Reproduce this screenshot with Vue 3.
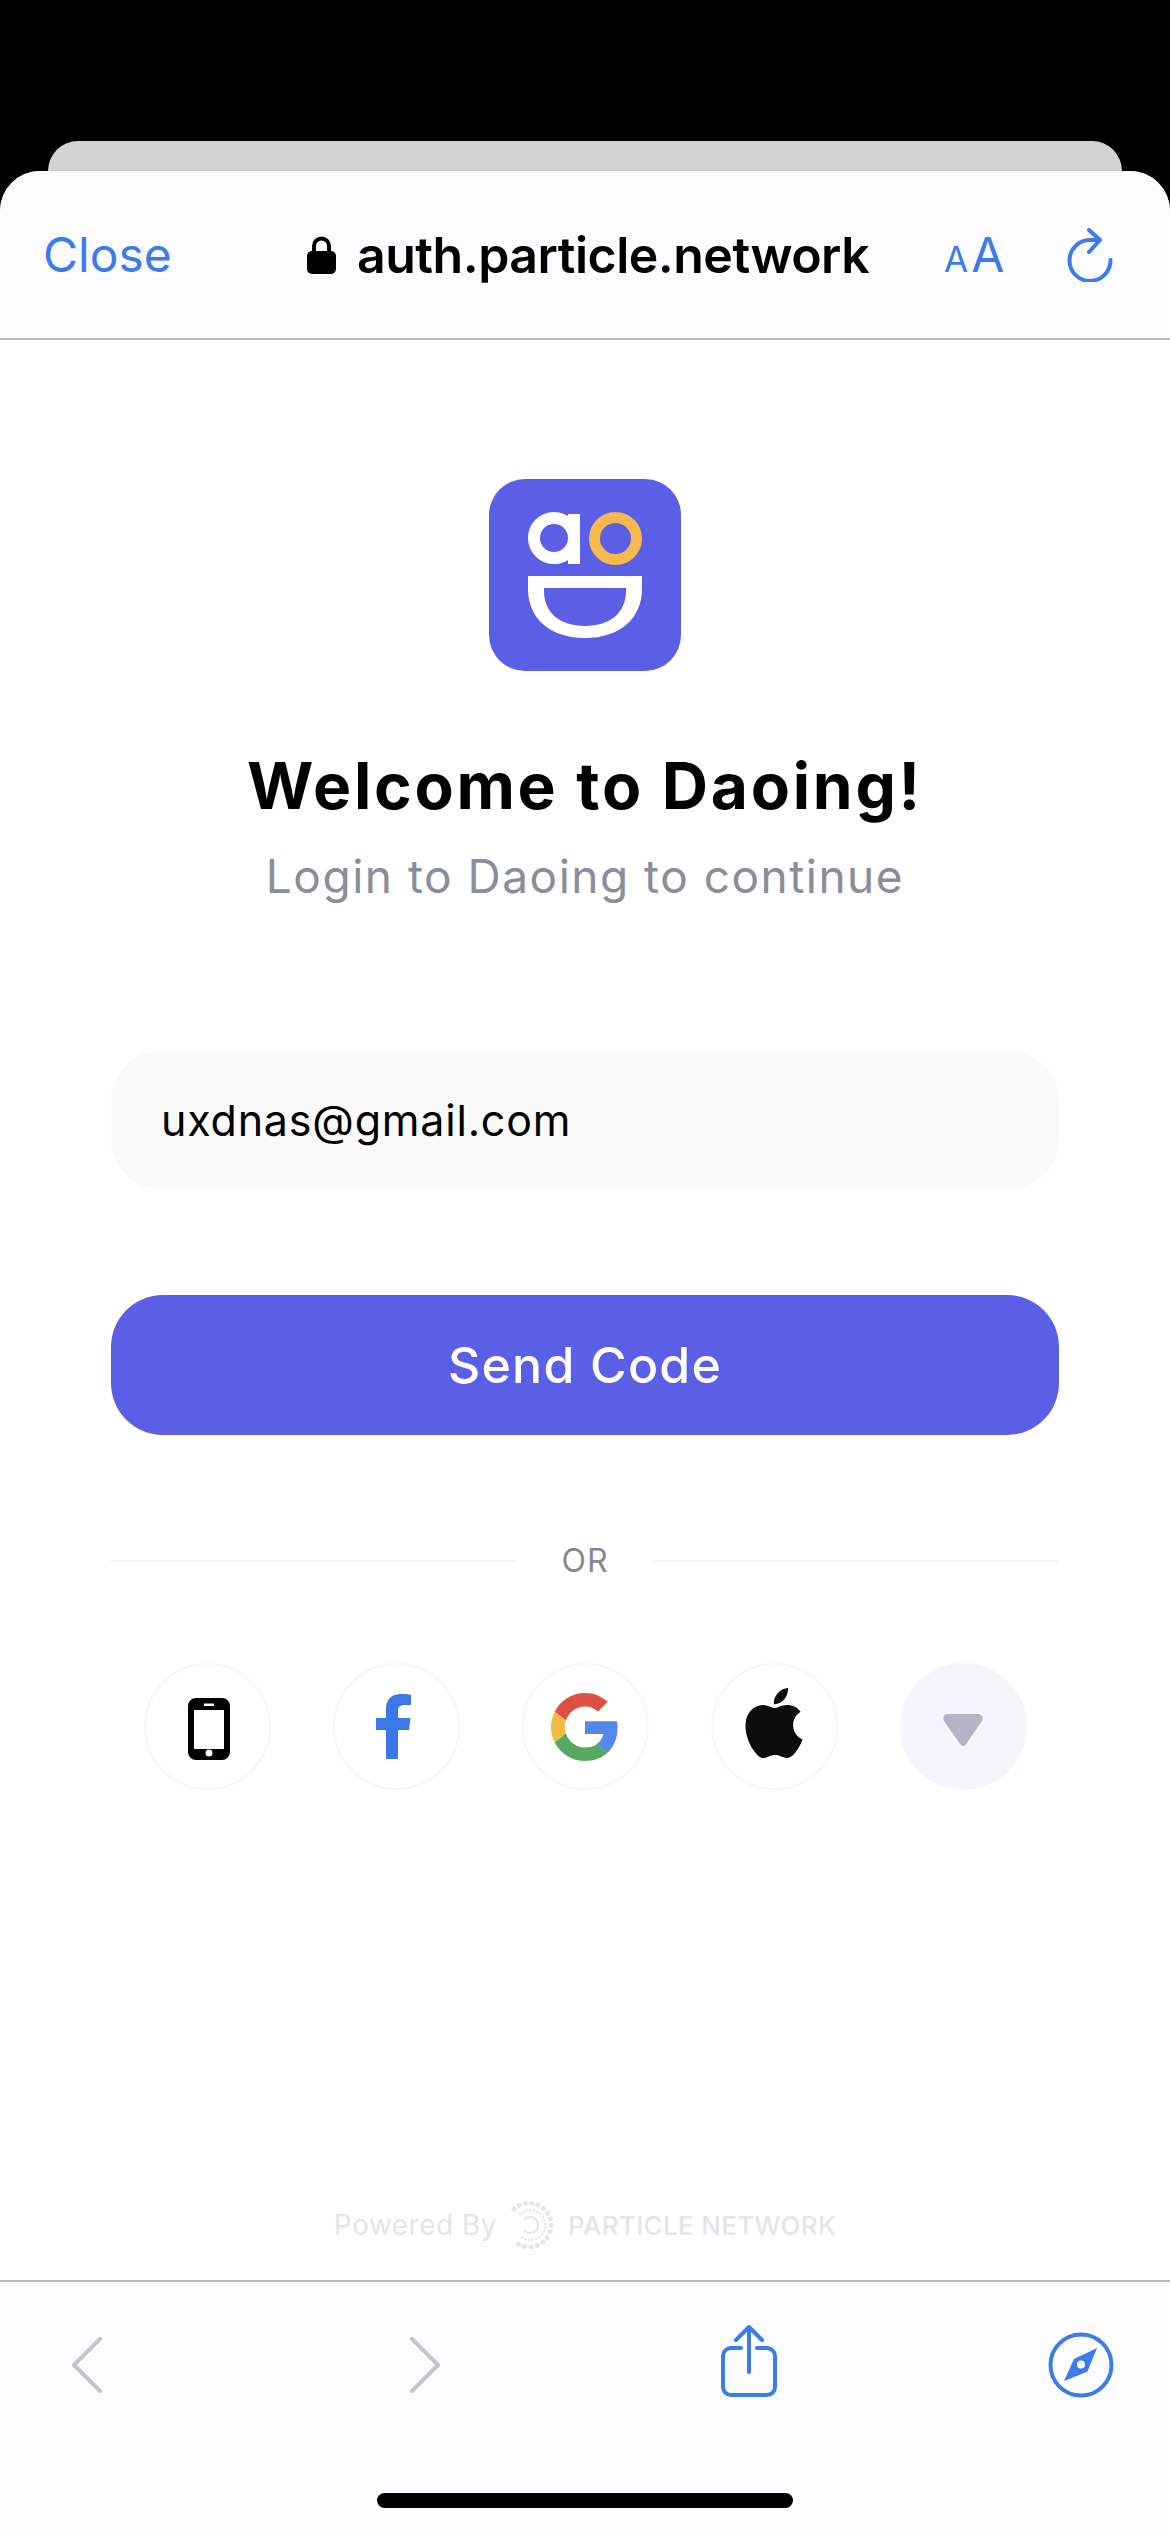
<script setup>
import { ref } from 'vue'

const email = ref('uxdnas@gmail.com')
</script>

<template>
  <div class="screen">
    <div class="back-card"></div>
    <div class="sheet">
      <header class="topbar">
        <span class="close">Close</span>
        <div class="address">
          <svg class="lock" width="29" height="39" viewBox="0 0 29 39">
            <path d="M7 18V11a7.500 7.500 0 0 1 15 0v7" fill="none" stroke="#000" stroke-width="4" />
            <rect x="0" y="16" width="29" height="23" rx="5" fill="#000" />
          </svg>
          <span class="url">auth.particle.network</span>
        </div>
        <div class="reader"><span class="small-a">A</span><span class="big-a">A</span></div>
        <svg class="reload" width="46" height="54" viewBox="0 0 46 54" fill="none" stroke="#3b7bea" stroke-width="4" stroke-linecap="round" stroke-linejoin="round">
          <path d="M33 12H23A20.500 20.500 0 1 0 43.500 32" />
          <path d="M22 2L33 12L22 24" />
        </svg>
      </header>

      <main class="content">
        <svg class="logo" width="192" height="192" viewBox="0 0 192 192">
          <rect width="192" height="192" rx="36" fill="#5b5fe6" />
          <circle cx="65" cy="59" r="20" fill="none" stroke="#fff" stroke-width="12" />
          <rect x="79" y="35" width="12" height="50" fill="#fff" />
          <circle cx="126.500" cy="59.500" r="21" fill="none" stroke="#f5b94c" stroke-width="11" />
          <path fill="#fff" fill-rule="evenodd" d="M39 97H153V110C153 140 130 159 96 159C62 159 39 140 39 110ZM55 109V112C55 133 70 147 96 147C122 147 137 133 137 112V109Z" />
        </svg>

        <h1 class="title">Welcome to Daoing!</h1>
        <p class="subtitle">Login to Daoing to continue</p>

        <input class="email" type="text" v-model="email" />
        <button class="send">Send Code</button>

        <div class="divider">
          <span class="rule"></span>
          <span class="or">OR</span>
          <span class="rule"></span>
        </div>

        <div class="socials">
          <div class="social">
            <svg class="phone" width="42" height="62" viewBox="0 0 42 62">
              <path fill-rule="evenodd" fill="#000" d="M8 0H34A8 8 0 0 1 42 8V54A8 8 0 0 1 34 62H8A8 8 0 0 1 0 54V8A8 8 0 0 1 8 0ZM6 12V51H36V12ZM16 5.500V8H26V5.500ZM21 51.500A3.500 3.500 0 1 0 21 58.500A3.500 3.500 0 1 0 21 51.500Z" />
            </svg>
          </div>
          <div class="social">
            <svg class="facebook" width="35" height="65" viewBox="0 0 35 65">
              <path fill="#3b78e7" d="M10 65V36H0V24H10V15C10 5 16 0 25 0C29 0 33 .4 35 .8V11H29C24 11 22 13 22 17V24H34.500L33 36H22V65Z" />
            </svg>
          </div>
          <div class="social">
            <svg width="68" height="68" viewBox="0 0 48 48">
              <path fill="#dd5144" d="M24 9.500c3.540 0 6.710 1.220 9.210 3.600l6.850-6.850C35.900 2.380 30.470 0 24 0 14.620 0 6.510 5.380 2.560 13.220l7.980 6.190C12.430 13.720 17.740 9.500 24 9.500z" />
              <path fill="#5688ec" d="M46.980 24.550c0-1.570-.15-3.090-.38-4.550H24v9.020h12.940c-.58 2.960-2.260 5.480-4.780 7.180l7.730 6c4.510-4.180 7.090-10.360 7.090-17.650z" />
              <path fill="#f1bc42" d="M10.530 28.590c-.48-1.450-.76-2.990-.76-4.590s.27-3.140.76-4.590l-7.980-6.190C.92 16.460 0 20.120 0 24c0 3.880.92 7.540 2.560 10.780l7.970-6.190z" />
              <path fill="#57a95f" d="M24 48c6.480 0 11.930-2.130 16.030-5.810l-7.730-6c-2.150 1.450-4.920 2.300-8.300 2.300-6.260 0-11.570-4.220-13.470-9.910l-7.980 6.190C6.510 42.620 14.620 48 24 48z" />
            </svg>
          </div>
          <div class="social">
            <svg class="apple" width="70" height="70" viewBox="0 0 24 24">
              <path fill="#0d0d0d" d="M12.152 6.896c-.948 0-2.415-1.078-3.960-1.040-2.040.027-3.910 1.183-4.961 3.014-2.117 3.675-.546 9.103 1.519 12.090 1.013 1.454 2.208 3.090 3.792 3.039 1.520-.065 2.090-.987 3.935-.987 1.831 0 2.350.987 3.960.948 1.637-.026 2.676-1.480 3.676-2.948 1.156-1.688 1.636-3.325 1.662-3.415-.039-.013-3.182-1.221-3.220-4.857-.026-3.040 2.480-4.494 2.597-4.559-1.429-2.090-3.623-2.324-4.390-2.376-2-.156-3.675 1.090-4.610 1.090zM15.530 3.830c.843-1.012 1.400-2.427 1.245-3.830-1.207.052-2.662.805-3.532 1.818-.780.896-1.454 2.338-1.273 3.714 1.338.104 2.715-.688 3.559-1.701" />
            </svg>
          </div>
          <div class="social more">
            <svg class="arrow" width="40" height="32" viewBox="0 0 40 32">
              <path fill="#b3b5c4" d="M5 0H35C39 0 41 4 39 7L23 30C21.500 32.500 18.500 32.500 17 30L1 7C-1 4 1 0 5 0Z" />
            </svg>
          </div>
        </div>

        <div class="powered">
          <span class="powered-by">Powered By</span>
          <svg class="particle" width="42" height="48" viewBox="0 0 42 48" fill="none" stroke="#e4e5e9" stroke-linecap="round">
            <path d="M3 8A22 22 0 1 1 3 40" stroke-width="5" stroke-dasharray="0.100 6.300" />
            <path d="M9 13A15 15 0 1 1 9 35" stroke-width="2.500" stroke-dasharray="0.100 3.600" />
            <path d="M14 18A8 8 0 1 1 14 30" stroke-width="2" />
          </svg>
          <span class="particle-name">PARTICLE NETWORK</span>
        </div>
      </main>

      <footer class="toolbar">
        <div class="tools">
          <svg class="back" width="32" height="56" viewBox="0 0 32 56" fill="none" stroke="#c6c6c8" stroke-width="4" stroke-linecap="round" stroke-linejoin="round">
            <path d="M29 2L3 28L29 54" />
          </svg>
          <svg class="forward" width="32" height="56" viewBox="0 0 32 56" fill="none" stroke="#c6c6c8" stroke-width="4" stroke-linecap="round" stroke-linejoin="round">
            <path d="M3 2L29 28L3 54" />
          </svg>
          <svg class="share" width="56" height="72" viewBox="0 0 56 72" fill="none" stroke="#3b7bea" stroke-width="4" stroke-linecap="round" stroke-linejoin="round">
            <path d="M20 23H10A8 8 0 0 0 2 31V62A8 8 0 0 0 10 70H46A8 8 0 0 0 54 62V31A8 8 0 0 0 46 23H36" />
            <path d="M28 47V3" />
            <path d="M15 15L28 2L41 15" />
          </svg>
          <svg class="compass" width="66" height="66" viewBox="0 0 66 66">
            <circle cx="33" cy="33" r="30.500" fill="none" stroke="#3b7bea" stroke-width="4" />
            <path fill="#3b7bea" fill-rule="evenodd" d="M49 16L39.500 39.500L16 49L26 27ZM33 28.500A4 4 0 1 0 33 36.500A4 4 0 1 0 33 28.500Z" />
          </svg>
        </div>
        <div class="home-indicator"></div>
      </footer>
    </div>
  </div>
</template>

<style scoped>
.screen {
  width: 1170px;
  height: 2532px;
  background: #000;
  padding-top: 141px;
  box-sizing: border-box;
  display: flex;
  flex-direction: column;
  align-items: center;
  overflow: hidden;
  font-family: Inter, "Liberation Sans", sans-serif;
}

.back-card {
  flex: none;
  width: 1074px;
  height: 30px;
  background: #d2d4d1;
  border-radius: 32px 32px 0 0;
}

.sheet {
  flex: 1;
  width: 100%;
  min-height: 0;
  background: #fff;
  border-radius: 40px 40px 0 0;
  display: flex;
  flex-direction: column;
  overflow: hidden;
}

.topbar {
  flex: none;
  height: 169px;
  box-sizing: border-box;
  background: #fcfcff;
  border-bottom: 2px solid #bdbdbd;
  display: flex;
  align-items: center;
  padding: 0 57px 0 43px;
}

.close {
  font-size: 48px;
  color: #3b7bea;
  width: 264px;
}

.address {
  display: flex;
  align-items: center;
  gap: 21px;
  width: 637px;
}

.lock {
  flex: none;
}

.url {
  font-size: 50px;
  font-weight: 600;
  color: #000;
  white-space: nowrap;
  letter-spacing: -0.5px;
}

.reader {
  display: flex;
  align-items: baseline;
  color: #3b7bea;
  width: 123px;
}

.small-a {
  font-size: 35px;
  margin-right: 3px;
}

.big-a {
  font-size: 48px;
}

.reload {
  flex: none;
}

.content {
  flex: 1;
  min-height: 0;
  display: flex;
  flex-direction: column;
  align-items: center;
  padding: 139px 111px 0;
}

.logo {
  flex: none;
}

.title {
  margin: 76px 0 0;
  font-size: 64px;
  line-height: 78px;
  font-weight: 700;
  color: #000;
  letter-spacing: 2.75px;
  white-space: nowrap;
}

.subtitle {
  margin: 23px 0 0;
  font-size: 46px;
  line-height: 56px;
  color: #8b8c9c;
  letter-spacing: 1.5px;
  white-space: nowrap;
}

.email {
  margin-top: 147px;
  width: 100%;
  height: 138px;
  flex: none;
  box-sizing: border-box;
  border: none;
  outline: none;
  border-radius: 50px;
  background: #f9f9f9;
  padding: 0 50px;
  font-family: inherit;
  font-size: 43px;
  letter-spacing: 0.8px;
  color: #000;
}

.send {
  margin-top: 106px;
  width: 100%;
  height: 140px;
  flex: none;
  border: none;
  border-radius: 52px;
  background: #5b5fe6;
  color: #fff;
  font-family: inherit;
  font-size: 50px;
  font-weight: 500;
  letter-spacing: 1.2px;
}

.divider {
  margin-top: 106px;
  width: 100%;
  display: flex;
  align-items: center;
  gap: 45px;
}

.rule {
  flex: 1;
  height: 2px;
  background: #f2f2f4;
}

.or {
  font-size: 32px;
  line-height: 40px;
  color: #85868f;
  letter-spacing: 1px;
}

.socials {
  margin-top: 82px;
  display: flex;
  gap: 62px;
}

.social {
  width: 127px;
  height: 127px;
  box-sizing: border-box;
  border: 2px solid #f6f7f8;
  border-radius: 50%;
  display: flex;
  align-items: center;
  justify-content: center;
}

.phone {
  margin: 4px 0 0 3px;
}

.facebook {
  margin-left: -6px;
}

.apple {
  margin-top: -7px;
}

.more {
  background: #f5f6fb;
  border-color: #f5f6fb;
}

.arrow {
  margin-top: 6px;
}

.powered {
  margin-top: auto;
  margin-bottom: 31px;
  display: flex;
  align-items: center;
  color: #e4e5e9;
}

.powered-by {
  font-size: 28px;
  letter-spacing: 0.5px;
  white-space: nowrap;
}

.particle {
  margin: 0 15px 0 14px;
}

.particle-name {
  font-size: 26px;
  font-weight: 500;
  letter-spacing: 0.3px;
  white-space: nowrap;
}

.toolbar {
  flex: none;
  height: 252px;
  box-sizing: border-box;
  border-top: 2px solid #bdbdbd;
  background: #fcfcff;
  display: flex;
  flex-direction: column;
}

.tools {
  display: flex;
  align-items: center;
  height: 165px;
  padding-left: 71px;
}

.forward {
  margin-left: 306px;
}

.share {
  margin: 0 0 7px 280px;
}

.compass {
  margin-left: 271px;
}

.home-indicator {
  align-self: center;
  width: 416px;
  height: 15px;
  margin-top: 46px;
  background: #000;
  border-radius: 8px;
}
</style>

<style>
html,
body {
  margin: 0;
  background: #000;
}
</style>
